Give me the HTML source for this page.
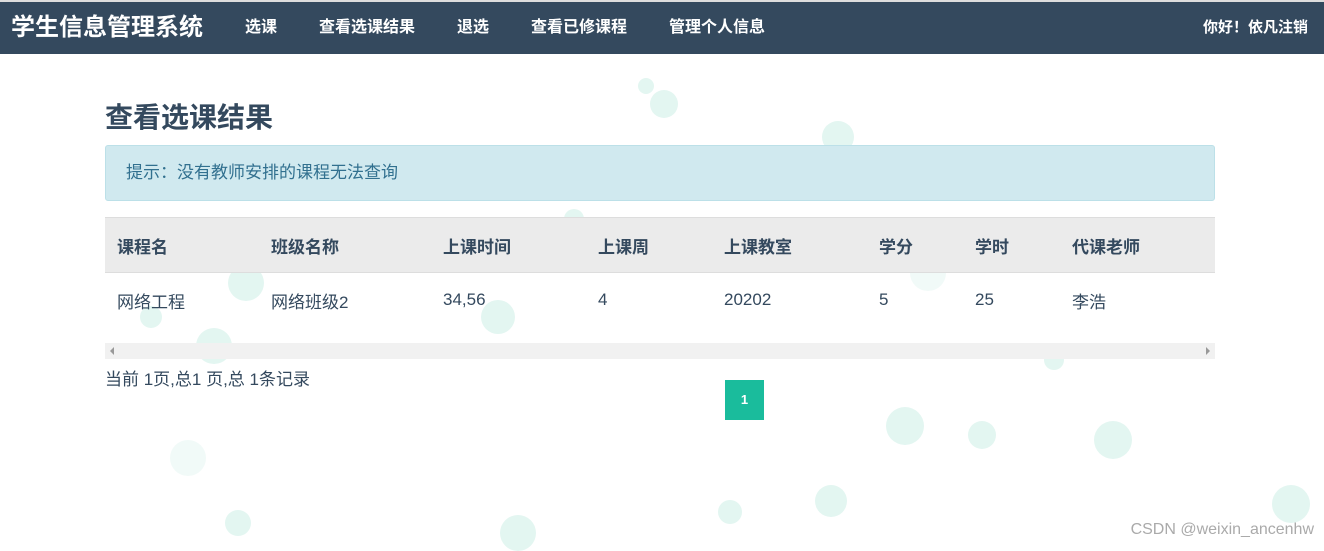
<!DOCTYPE html>
<html><head><meta charset="utf-8"><style>
body{margin:0;width:1324px;height:550px;background:#fff;position:relative;overflow:hidden;font-family:"Liberation Sans","Noto Sans CJK SC",sans-serif;color:#34495e}
.b{position:absolute;border-radius:50%;background:#e3f6f1}
.nav{position:absolute;top:2px;left:0;width:1324px;height:52px;background:#34495e;color:#fff}
.nav span{position:absolute;top:0;line-height:52px;font-weight:bold;font-size:16px}
h1{position:absolute;left:105px;top:96px;margin:0;font-size:28px;font-weight:bold;color:#34495e}
.alert{position:absolute;left:105px;top:145px;width:1108px;height:54px;background:#d0e9ef;border:1px solid #bce0e8;border-radius:3px;color:#31708f;font-size:17px;line-height:54px;text-indent:20px}
table{position:absolute;left:105px;top:217px;width:1110px;border-collapse:collapse;font-size:17px}
th{background:#ebebeb;height:54px;text-align:left;font-weight:bold;border-top:1px solid #ddd;border-bottom:1px solid #ddd;padding:0 0 0 12px}
td{height:54px;padding:0 0 0 12px;color:#34495e}
.sb{position:absolute;left:105px;top:343px;width:1110px;height:16px;background:#f1f1f1}
.pg{position:absolute;left:105px;top:365px;font-size:17px}
.p1{position:absolute;left:725px;top:380px;width:39px;height:40px;background:#1abc9c;color:#fff;font-size:13px;font-weight:bold;text-align:center;line-height:40px}
.wm{position:absolute;right:10px;top:521px;color:#aaa;font-size:16px}
</style></head><body>
<div style="position:absolute;top:0;left:0;width:1324px;height:2px;background:#ddd"></div>
<div class="b" style="left:822px;top:121px;width:32px;height:32px"></div>
<div class="b" style="left:650px;top:90px;width:28px;height:28px"></div>
<div class="b" style="left:638px;top:78px;width:16px;height:16px"></div>
<div class="b" style="left:564px;top:209px;width:20px;height:20px"></div>
<div class="b" style="left:228px;top:265px;width:36px;height:36px"></div>
<div class="b" style="left:481px;top:300px;width:34px;height:34px"></div>
<div class="b" style="left:140px;top:306px;width:22px;height:22px"></div>
<div class="b" style="left:196px;top:328px;width:36px;height:36px"></div>
<div class="b" style="left:886px;top:407px;width:38px;height:38px"></div>
<div class="b" style="left:968px;top:421px;width:28px;height:28px"></div>
<div class="b" style="left:1094px;top:421px;width:38px;height:38px"></div>
<div class="b" style="left:815px;top:485px;width:32px;height:32px"></div>
<div class="b" style="left:718px;top:500px;width:24px;height:24px"></div>
<div class="b" style="left:500px;top:515px;width:36px;height:36px"></div>
<div class="b" style="left:225px;top:510px;width:26px;height:26px"></div>
<div class="b" style="left:1272px;top:485px;width:38px;height:38px"></div>
<div class="b" style="left:1044px;top:350px;width:20px;height:20px"></div>
<div class="b" style="left:170px;top:440px;width:36px;height:36px;opacity:.5"></div>
<div class="b" style="left:910px;top:255px;width:36px;height:36px;opacity:.5"></div>
<div class="nav">
<span style="left:11px;font-size:24px">学生信息管理系统</span>
<span style="left:245px">选课</span>
<span style="left:319px">查看选课结果</span>
<span style="left:457px">退选</span>
<span style="left:531px">查看已修课程</span>
<span style="left:669px">管理个人信息</span>
<span style="right:16px;font-size:15px">你好！依凡注销</span>
</div>
<h1>查看选课结果</h1>
<div class="alert">提示：没有教师安排的课程无法查询</div>
<table>
<tr><th style="width:142px">课程名</th><th style="width:160px">班级名称</th><th style="width:143px">上课时间</th><th style="width:114px">上课周</th><th style="width:143px">上课教室</th><th style="width:84px">学分</th><th style="width:85px">学时</th><th>代课老师</th></tr>
<tr><td>网络工程</td><td>网络班级2</td><td>34,56</td><td>4</td><td>20202</td><td>5</td><td>25</td><td>李浩</td></tr>
</table>
<div class="sb"><span style="position:absolute;left:5px;top:4px;border:4px solid transparent;border-right-color:#999;border-left:0"></span><span style="position:absolute;right:5px;top:4px;border:4px solid transparent;border-left-color:#999;border-right:0"></span></div>
<div class="pg">当前 1页,总1 页,总 1条记录</div>
<div class="p1">1</div>
<div class="wm">CSDN @weixin_ancenhw</div>
</body></html>
